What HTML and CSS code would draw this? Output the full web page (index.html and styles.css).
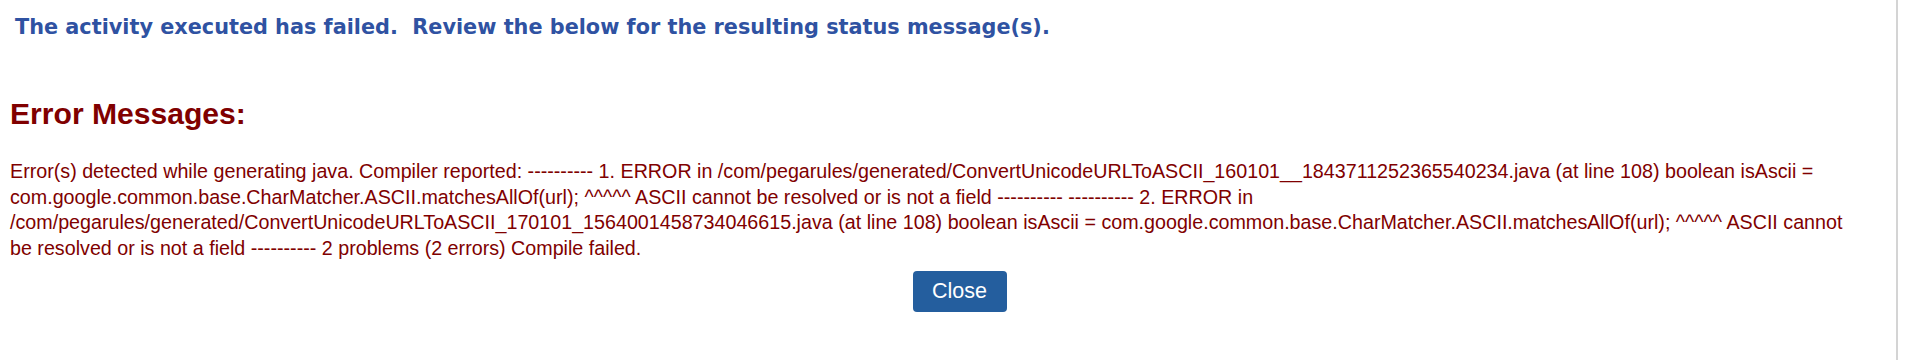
FILE: index.html
```html
<!DOCTYPE html>
<html>
<head>
<meta charset="utf-8">
<link rel="stylesheet" href="styles.css">
</head>
<body>
<div class="frame">
  <div class="status">The activity executed has failed.&nbsp; Review the below for the resulting status message(s).</div>
  <div class="errors">
    <h2 class="errors-title">Error Messages:</h2>
    <p class="errors-text">Error(s) detected while generating java. Compiler reported: ---------- 1. ERROR in /com/pegarules/generated/ConvertUnicodeURLToASCII_160101__1843711252365540234.java (at line 108) boolean isAscii = com.google.common.base.CharMatcher.ASCII.matchesAllOf(url); ^^^^^ ASCII cannot be resolved or is not a field ---------- ---------- 2. ERROR in /com/pegarules/generated/ConvertUnicodeURLToASCII_170101_1564001458734046615.java (at line 108) boolean isAscii = com.google.common.base.CharMatcher.ASCII.matchesAllOf(url); ^^^^^ ASCII cannot be resolved or is not a field ---------- 2 problems (2 errors) Compile failed.</p>
  </div>
  <div class="actions">
    <button class="btn-close" type="button">Close</button>
  </div>
</div>
</body>
</html>
```

FILE: styles.css
```css
html, body {
  margin: 0;
  padding: 0;
  background: #ffffff;
}
.frame {
  width: 1898px;
  height: 360px;
  border-right: 2px solid #d4d4d4;
  box-sizing: border-box;
  padding: 0 40px 0 10px;
  font-family: "Liberation Sans", Arial, sans-serif;
}
.status {
  padding: 15px 0 0 5px;
  font-family: "DejaVu Sans", Verdana, sans-serif;
  font-weight: bold;
  font-size: 20.8px;
  line-height: 25px;
  color: #2f52a2;
}
.errors-title {
  margin: 0;
  padding-top: 57px;
  font-size: 30.1px;
  line-height: 34px;
  font-weight: bold;
  color: #800000;
}
.errors-text {
  margin: 28px 0 0 0;
  font-size: 19.7px;
  line-height: 25.5px;
  color: #800000;
}
.actions {
  display: flex;
  justify-content: center;
  padding: 10px 0 0 53px;
}
.btn-close {
  width: 94px;
  height: 41px;
  border: none;
  border-radius: 4px;
  background: #245e9e;
  color: #ffffff;
  font-family: "Liberation Sans", Arial, sans-serif;
  font-size: 21.5px;
  padding: 0;
}
```
